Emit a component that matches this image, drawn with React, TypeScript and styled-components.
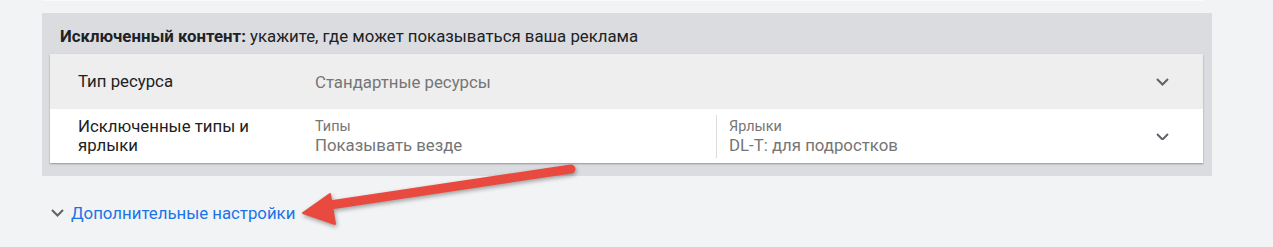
import React from "react";
import styled, { createGlobalStyle } from "styled-components";

const Global = createGlobalStyle`
  html, body { margin: 0; padding: 0; background: #f1f3f4; }
  body { font-family: Roboto, "Noto Sans", Arial, sans-serif; -webkit-font-smoothing: antialiased; }
  #root { position: relative; width: 1273px; height: 247px; overflow: hidden; }
`;

const Page = styled.div`
  position: relative;
  padding-left: 42px;
  width: 1170px;
`;

const PrevEdge = styled.div`
  height: 1px;
  width: 1162px;
  background: #f9fafb;
`;

const Panel = styled.section`
  margin-top: 12px;
  background: #dadce0;
  padding: 0 9px 13px 8px;
`;

const PanelHeader = styled.div`
  padding: 13px 10px 8px;
  font-size: 16.8px;
  line-height: 20px;
  color: #202124;
  b { font-weight: 700; }
`;

const Card = styled.div`
  box-shadow: 0 1px 2px rgba(60, 64, 67, 0.3), 0 1px 1px rgba(60, 64, 67, 0.15);
`;

const Row = styled.div<{ $shade?: boolean }>`
  display: grid;
  grid-template-columns: 265px 1fr 82px;
  align-items: center;
  height: ${(p) => (p.$shade ? "55px" : "54px")};
  background: ${(p) => (p.$shade ? "#eeeeee" : "#ffffff")};
`;

const Label = styled.div`
  padding-left: 28px;
  padding-right: 40px;
  font-size: 16.8px;
  line-height: 19px;
  color: #202124;
`;

const Value = styled.div`
  font-size: 16.8px;
  line-height: 20px;
  color: #757575;
`;

const Split = styled.div`
  display: grid;
  grid-template-columns: 401px 1fr;
  height: 100%;
  align-items: center;
`;

const Field = styled.div<{ $divided?: boolean }>`
  display: flex;
  flex-direction: column;
  justify-content: center;
  height: 43px;
  padding-left: ${(p) => (p.$divided ? "12px" : "0")};
  border-left: ${(p) => (p.$divided ? "1px solid #dadce0" : "none")};
  margin-top: 1px;
`;

const FieldCaption = styled.div`
  font-size: 14.4px;
  line-height: 17px;
  color: #757575;
  margin-top: -1px;
`;

const FieldValue = styled.div`
  font-size: 16.8px;
  line-height: 20px;
  color: #757575;
`;

const ChevronCell = styled.div`
  display: flex;
  justify-content: center;
  align-items: center;
  color: #5f6368;
  padding-top: 1px;
`;

const MoreLink = styled.a`
  display: flex;
  align-items: center;
  gap: 7px;
  margin-top: 27px;
  padding-left: 9px;
  font-size: 16.8px;
  line-height: 20px;
  color: #1a73e8;
  text-decoration: none;
  cursor: pointer;
`;

const LinkChevron = styled.span`
  display: flex;
  color: #5f6368;
`;

const ArrowLayer = styled.svg`
  position: absolute;
  left: 0;
  top: 0;
  width: 1273px;
  height: 247px;
  pointer-events: none;
  filter: drop-shadow(1px 2px 2px rgba(0, 0, 0, 0.35));
`;

const Chevron = ({ size = 13 }: { size?: number }) => (
  <svg width={size} height={size * 0.6} viewBox="0 0 13 7.8" fill="none">
    <path d="M1 1l5.5 5.5 5.5-5.5" stroke="currentColor" strokeWidth="2" strokeLinecap="butt" />
  </svg>
);

export default function App() {
  return (
    <>
      <Global />
      <Page>
        <PrevEdge />
        <Panel>
          <PanelHeader>
            <b>Исключенный контент:</b> укажите, где может показываться ваша реклама
          </PanelHeader>
          <Card>
            <Row $shade>
              <Label>Тип ресурса</Label>
              <Value>Стандартные ресурсы</Value>
              <ChevronCell>
                <Chevron />
              </ChevronCell>
            </Row>
            <Row>
              <Label>Исключенные типы и ярлыки</Label>
              <Split>
                <Field>
                  <FieldCaption>Типы</FieldCaption>
                  <FieldValue>Показывать везде</FieldValue>
                </Field>
                <Field $divided>
                  <FieldCaption>Ярлыки</FieldCaption>
                  <FieldValue>DL-T: для подростков</FieldValue>
                </Field>
              </Split>
              <ChevronCell>
                <Chevron />
              </ChevronCell>
            </Row>
          </Card>
        </Panel>
        <MoreLink>
          <LinkChevron>
            <Chevron />
          </LinkChevron>
          Дополнительные настройки
        </MoreLink>
      </Page>
      <ArrowLayer viewBox="0 0 1273 247">
        <line x1="571" y1="169" x2="330" y2="205" stroke="#e84a3f" strokeWidth="9" strokeLinecap="round" />
        <polygon points="303,213 330,194 335,224" fill="#e84a3f" stroke="#e84a3f" strokeWidth="2" strokeLinejoin="round" />
      </ArrowLayer>
    </>
  );
}
